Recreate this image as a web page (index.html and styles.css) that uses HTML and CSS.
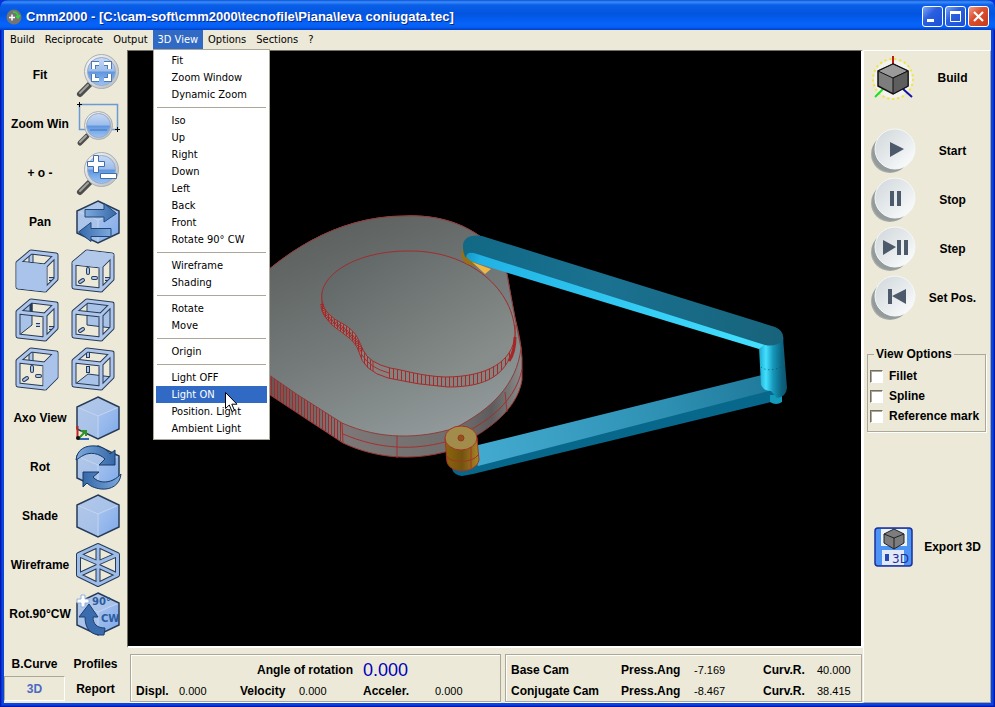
FILE: index.html
```html
<!DOCTYPE html>
<html lang="en">
<head>
<meta charset="utf-8">
<title>Cmm2000</title>
<link rel="stylesheet" href="styles.css">
</head>
<body>
<svg class="defs" aria-hidden="true">
  <defs>
    <linearGradient id="lens" x1="0" y1="0" x2="0" y2="1"><stop offset="0" stop-color="#c9daf4"/><stop offset=".48" stop-color="#9dbdeb"/><stop offset=".52" stop-color="#5f96df"/><stop offset="1" stop-color="#9cc4f5"/></linearGradient>
    <linearGradient id="ring" x1="0" y1="0" x2="1" y2="1"><stop offset="0" stop-color="#fafafa"/><stop offset="1" stop-color="#b4bac0"/></linearGradient>
    <linearGradient id="face" x1="0" y1="0" x2="1" y2="1"><stop offset="0" stop-color="#b4c9e9"/><stop offset="1" stop-color="#9dbbe8"/></linearGradient>
    <linearGradient id="faceR" x1="0" y1="0" x2="1" y2="1"><stop offset="0" stop-color="#a9c4ee"/><stop offset="1" stop-color="#7ea9ea"/></linearGradient>
    <linearGradient id="arrow" x1="0" y1="0" x2="1" y2="0"><stop offset="0" stop-color="#7ea9dd"/><stop offset="1" stop-color="#3568a8"/></linearGradient>
    <linearGradient id="arrowB" x1="0" y1="0" x2="1" y2="0"><stop offset="0" stop-color="#3568a8"/><stop offset="1" stop-color="#7ea9dd"/></linearGradient>
    <linearGradient id="knob" x1="0" y1="0" x2="1" y2="1"><stop offset="0" stop-color="#cfd6da"/><stop offset=".5" stop-color="#e6eaec"/><stop offset="1" stop-color="#ffffff"/></linearGradient>
    <symbol id="glass" viewBox="0 0 44 44">
      <path d="M13 32 4 41" stroke="#4d4d4d" stroke-width="6" stroke-linecap="round"/>
      <path d="M12 32 4 40" stroke="#a2a29e" stroke-width="2" stroke-linecap="round"/>
      <circle cx="25.500" cy="18.500" r="17" fill="url(#ring)" stroke="#a9aeb2"/>
      <circle cx="25.500" cy="18.500" r="14" fill="url(#lens)" stroke="#9aabc4"/>
    </symbol>
    <symbol id="solid" viewBox="0 0 44 44">
      <path d="M22 1 43 11V33L22 43 1 33V11Z" fill="url(#face)"/>
      <path d="M22 20 43 11V33L22 43Z" fill="url(#faceR)"/>
      <path d="M1 11 22 20 43 11M22 20V43" fill="none" stroke="#c3d5f1"/>
      <path d="M22 1 43 11V33L22 43 1 33V11Z" fill="none" stroke="#263b57" stroke-width="1.500"/>
    </symbol>
    <symbol id="stubs" viewBox="0 0 44 44">
      <g stroke-linecap="round"><path d="M17 20V24M9 33 12 31M22 29H25" stroke="#263b57" stroke-width="4"/><path d="M17 20V24M9 33 12 31M22 29H25" stroke="#afc6ea" stroke-width="2"/></g>
    </symbol>
    <symbol id="cage" viewBox="0 0 44 44">
      <g fill="none" stroke-linejoin="round">
        <path d="M3 14 30 17V41L3 38ZM3 14 16 3 41 6 30 17M41 6V30L30 41" stroke="#263b57" stroke-width="5"/>
        <path d="M3 14 30 17V41L3 38ZM3 14 16 3 41 6 30 17M41 6V30L30 41" stroke="#afc6ea" stroke-width="3"/>
      </g>
    </symbol>
    <symbol id="knobshape" viewBox="0 0 46 46">
      <circle cx="20" cy="26" r="19" fill="#a6aaa9"/>
      <circle cx="21" cy="25" r="19" fill="#8d9495" opacity=".7"/>
      <circle cx="25" cy="21" r="20" fill="url(#knob)" stroke="#f6f8f8"/>
    </symbol>
  </defs>
</svg>
<div class="window">
  <header class="titlebar">
    <svg class="app-icon" viewBox="0 0 16 16" aria-hidden="true"><circle cx="8" cy="8" r="7.500" fill="#747474"/><path d="M3 8.500H9M6 5.500V11.500" stroke="#fff" stroke-width="1.500"/><path d="M7 3Q12 3 12 8M10 7 12 9 14 6" fill="none" stroke="#35d23a" stroke-width="1.500"/></svg>
    <h1>Cmm2000 - [C:\cam-soft\cmm2000\tecnofile\Piana\leva coniugata.tec]</h1>
    <div class="window-buttons">
      <button type="button" aria-label="Minimize"><svg viewBox="0 0 19 19"><path d="M4 13.500H11" stroke="#fff" stroke-width="3"/></svg></button>
      <button type="button" aria-label="Maximize"><svg viewBox="0 0 19 19"><path d="M4.500 5V14.500H14.500V5" fill="none" stroke="#fff"/><path d="M4 5.500H15" stroke="#fff" stroke-width="3"/></svg></button>
      <button type="button" class="close" aria-label="Close"><svg viewBox="0 0 19 19"><path d="M5 5 14 14M14 5 5 14" stroke="#fff" stroke-width="2.200"/></svg></button>
    </div>
  </header>
  <nav class="menubar">
    <button type="button">Build</button>
    <button type="button">Reciprocate</button>
    <button type="button">Output</button>
    <div class="menu-host">
      <button type="button" class="open" aria-expanded="true">3D View</button>
      <div class="dropdown">
        <button type="button">Fit</button>
        <button type="button">Zoom Window</button>
        <button type="button">Dynamic Zoom</button>
        <hr>
        <button type="button">Iso</button>
        <button type="button">Up</button>
        <button type="button">Right</button>
        <button type="button">Down</button>
        <button type="button">Left</button>
        <button type="button">Back</button>
        <button type="button">Front</button>
        <button type="button">Rotate 90° CW</button>
        <hr>
        <button type="button">Wireframe</button>
        <button type="button">Shading</button>
        <hr>
        <button type="button">Rotate</button>
        <button type="button">Move</button>
        <hr>
        <button type="button">Origin</button>
        <hr>
        <button type="button">Light OFF</button>
        <button type="button" class="selected">Light ON</button>
        <button type="button">Position. Light</button>
        <button type="button">Ambient Light</button>
        <svg class="pointer" viewBox="0 0 13 21" aria-hidden="true"><path d="M.5 .5V16.500L4.300 13 7 19.500 9.500 18.500 6.800 12.200H12Z" fill="#fff" stroke="#000"/></svg>
      </div>
    </div>
    <button type="button">Options</button>
    <button type="button">Sections</button>
    <button type="button">?</button>
  </nav>
  <main class="workspace">
    <aside class="tools">
      <div class="tool-list">
        <button type="button" class="tool"><span>Fit</span>
          <svg viewBox="0 0 44 44"><use href="#glass"/><path d="M17.500 16V10.500H23M28 10.500H33.500V16M33.500 21V26.500H28M23 26.500H17.500V21" fill="none" stroke="#4c78b4" stroke-width="5"/><path d="M17.500 16V10.500H23M28 10.500H33.500V16M33.500 21V26.500H28M23 26.500H17.500V21" fill="none" stroke="#fff" stroke-width="3"/></svg></button>
        <button type="button" class="tool"><span>Zoom Win</span>
          <svg viewBox="0 0 44 44"><path d="M3.500 2.500H41.500V27.500H3.500Z" fill="none" stroke="#6a9bd2" stroke-width="1.500"/><path d="M11 34 4 41" stroke="#4d4d4d" stroke-width="5" stroke-linecap="round"/><path d="M10 34 4 40" stroke="#a2a29e" stroke-width="2" stroke-linecap="round"/><circle cx="22.500" cy="23.500" r="14" fill="url(#ring)" stroke="#a9aeb2"/><circle cx="22.500" cy="23.500" r="12" fill="url(#lens)" stroke="#9aabc4"/><path d="M14 28H31" stroke="#3f72b8"/><path d="M1 2.500H6M3.500 0V5M39 27.500H44M41.500 25V30" stroke="#000"/></svg></button>
        <button type="button" class="tool"><span>+ o -</span>
          <svg viewBox="0 0 44 44"><use href="#glass"/><path d="M17.500 4.500H22.500V10.500H28.500V15.500H22.500V21.500H17.500V15.500H11.500V10.500H17.500ZM24.500 22.500H40.500V27.500H24.500Z" fill="#fff" stroke="#3f6eae"/></svg></button>
        <button type="button" class="tool"><span>Pan</span>
          <svg viewBox="0 0 44 44"><use href="#solid"/><path d="M9 9.500H28V3.500L40.500 13.500 28 22V17H9Z" fill="url(#arrow)" stroke="#1f4878"/><path d="M35 28.500H15V22.500L2.500 32 15 41.500V36.500H35Z" fill="url(#arrowB)" stroke="#1f4878"/></svg></button>
        <div class="cubes">
          <button type="button" aria-label="Front face"><svg viewBox="0 0 44 44"><path d="M16 4V15" stroke="#263b57" stroke-width="5"/><path d="M16 4V14" stroke="#afc6ea" stroke-width="3"/><path d="M34 30H39" stroke="#263b57" stroke-width="4"/><path d="M34 30H39" stroke="#afc6ea" stroke-width="2"/><use href="#cage"/><path d="M3 14 30 17V41L3 38Z" fill="#a9c3ea" stroke="#a9c3ea" stroke-width="3" stroke-linejoin="round"/></svg></button>
          <button type="button" aria-label="Top face"><svg viewBox="0 0 44 44"><use href="#stubs"/><path d="M34 30H39" stroke="#263b57" stroke-width="4"/><path d="M34 30H39" stroke="#afc6ea" stroke-width="2"/><use href="#cage"/><path d="M3 14 16 3 41 6 30 17Z" fill="#b2c8e9" stroke="#b2c8e9" stroke-width="3" stroke-linejoin="round"/></svg></button>
        </div>
        <div class="cubes">
          <button type="button" aria-label="Left face"><svg viewBox="0 0 44 44"><path d="M3 14 17 5V27L3 38Z" fill="#a9c3e8" stroke="#263b57"/><path d="M16 4V15" stroke="#263b57" stroke-width="3"/><path d="M21 27H25M34 30H39" stroke="#263b57" stroke-width="4"/><path d="M21 27H25M34 30H39" stroke="#afc6ea" stroke-width="2"/><use href="#cage"/></svg></button>
          <button type="button" aria-label="Back face"><svg viewBox="0 0 44 44"><path d="M16 4 41 7V30L16 27Z" fill="#a9c3e8" stroke="#263b57"/><path d="M9 33 12 31" stroke="#263b57" stroke-width="4" stroke-linecap="round"/><path d="M9 33 12 31" stroke="#afc6ea" stroke-width="2" stroke-linecap="round"/><use href="#cage"/></svg></button>
        </div>
        <div class="cubes">
          <button type="button" aria-label="Right face"><svg viewBox="0 0 44 44"><path d="M16 4V15" stroke="#263b57" stroke-width="5"/><path d="M16 4V14" stroke="#afc6ea" stroke-width="3"/><use href="#stubs"/><use href="#cage"/><path d="M30 17 41 6V30L30 41Z" fill="#a9c3ea" stroke="#a9c3ea" stroke-width="3" stroke-linejoin="round"/></svg></button>
          <button type="button" aria-label="Bottom face"><svg viewBox="0 0 44 44"><path d="M3 38 17 27 41 30 30 41Z" fill="#a9c3e8" stroke="#263b57"/><path d="M17 5V11M17 19V26" stroke="#263b57" stroke-width="4"/><path d="M17 5V10M17 20V25" stroke="#afc6ea" stroke-width="2"/><use href="#cage"/></svg></button>
        </div>
        <button type="button" class="tool"><span>Axo View</span>
          <svg viewBox="0 0 44 44"><use href="#solid"/><path d="M1.500 43V30" stroke="#c81e1e" stroke-width="2"/><path d="M2 43H13" stroke="#2f67b4" stroke-width="2"/><path d="M2 43 9 36M5 35H10V40" fill="none" stroke="#2f9428" stroke-width="2"/><circle cx="2" cy="42" r="2" fill="#111"/></svg></button>
        <button type="button" class="tool"><span>Rot</span>
          <svg viewBox="0 0 44 44"><use href="#solid"/><path d="M0 15C1 4 10 0 20 1 27 2 31 5 34 9L39 5V20H23L29 14C23 8 14 7 8 10 4 12 2 14 0 15Z" fill="url(#arrow)" stroke="#173a66"/><path d="M45 29C44 40 35 45 25 44 18 43 14 41 11 38L7 42V27H23L17 32C22 38 31 38 37 35 41 33 43 31 45 29Z" fill="url(#arrowB)" stroke="#173a66"/></svg></button>
        <button type="button" class="tool"><span>Shade</span>
          <svg viewBox="0 0 44 44"><use href="#solid"/></svg></button>
        <button type="button" class="tool"><span>Wireframe</span>
          <svg viewBox="0 0 44 44"><g fill="none" stroke-linejoin="round"><path d="M22 2.500 41.500 11.500V32L22 41.500 2.500 32V11.500ZM2.500 11.500 22 20 41.500 11.500M22 2.500V41.500M2.500 32 22 23 41.500 32" stroke="#263b57" stroke-width="5"/><path d="M22 2.500 41.500 11.500V32L22 41.500 2.500 32V11.500ZM2.500 11.500 22 20 41.500 11.500M22 2.500V41.500M2.500 32 22 23 41.500 32" stroke="#9dbce8" stroke-width="3"/></g></svg></button>
        <button type="button" class="tool"><span>Rot.90°CW</span>
          <svg viewBox="0 0 44 44"><use href="#solid"/><path d="M5 3H9V7H13V11H9V15H5V11H1V7H5Z" fill="#fff" stroke="#8fb0dc"/><path d="M13 12 22 25H17C17 32 21 36 29 36L28 43C15 44 9 37 9 25H3Z" fill="#3b6cae" stroke="#1c3f70"/><text class="glyph-text" x="16" y="13">90°</text><text class="glyph-text" x="25" y="30">CW</text></svg></button>
      </div>
      <div class="tabs">
        <button type="button">B.Curve</button>
        <button type="button">Profiles</button>
        <button type="button" class="active">3D</button>
        <button type="button">Report</button>
      </div>
    </aside>
    <section class="center">
      <div class="viewer">
        <svg viewBox="128 51 733 595" role="img" aria-label="Conjugate cam with two levers">
          <defs>
            <linearGradient id="plate" gradientUnits="userSpaceOnUse" x1="350" y1="220" x2="440" y2="440"><stop offset="0" stop-color="#5d6261"/><stop offset=".5" stop-color="#757b7a"/><stop offset="1" stop-color="#929a9b"/></linearGradient>
            <linearGradient id="plate2" gradientUnits="userSpaceOnUse" x1="370" y1="250" x2="450" y2="380"><stop offset="0" stop-color="#626867"/><stop offset="1" stop-color="#868d8b"/></linearGradient>
            <linearGradient id="rim" gradientUnits="userSpaceOnUse" x1="270" y1="0" x2="522" y2="0"><stop offset="0" stop-color="#6d5452"/><stop offset=".3" stop-color="#7d7877"/><stop offset=".75" stop-color="#6f6d6d"/><stop offset=".88" stop-color="#5d5b5b"/><stop offset="1" stop-color="#8b8b8b"/></linearGradient>
            <linearGradient id="armTop" gradientUnits="userSpaceOnUse" x1="465" y1="240" x2="780" y2="340"><stop offset="0" stop-color="#126986"/><stop offset=".45" stop-color="#1a7190"/><stop offset="1" stop-color="#17637b"/></linearGradient>
            <linearGradient id="armSide" gradientUnits="userSpaceOnUse" x1="465" y1="255" x2="765" y2="350"><stop offset="0" stop-color="#1595c4"/><stop offset=".05" stop-color="#20b2e4"/><stop offset="1" stop-color="#45e0ff"/></linearGradient>
            <linearGradient id="arm2" gradientUnits="userSpaceOnUse" x1="478" y1="460" x2="775" y2="380"><stop offset="0" stop-color="#43aacf"/><stop offset=".6" stop-color="#2f92b5"/><stop offset="1" stop-color="#1f7899"/></linearGradient>
            <linearGradient id="post" x1="0" y1="0" x2="1" y2="0"><stop offset="0" stop-color="#18a9cc"/><stop offset=".25" stop-color="#44e0ff"/><stop offset=".5" stop-color="#1698bb"/><stop offset=".8" stop-color="#0d6583"/><stop offset="1" stop-color="#0f5068"/></linearGradient>
            <linearGradient id="roller" x1="0" y1="0" x2="1" y2="0"><stop offset="0" stop-color="#8b660c"/><stop offset=".5" stop-color="#74520e"/><stop offset="1" stop-color="#aa8528"/></linearGradient>
            <pattern id="hatch" width="3" height="20" patternUnits="userSpaceOnUse"><path d="M1.500 0V20" stroke="#a32b2b"/></pattern>
            <pattern id="hatchWide" width="4" height="20" patternUnits="userSpaceOnUse"><path d="M1.500 0V20" stroke="#a32b2b"/></pattern>
          </defs>
          <path d="M240 296C280 255 335 216 405 216C450 214 476 232 490 244L507 274Q511 297 515 318Q521 340 522 358L522 380C517 412 483 435 445 452C410 461 375 458 343 443L308 420 240 375Z" fill="url(#rim)" stroke="#9c3535"/>
          <path d="M240 296C280 255 335 216 405 216C450 214 476 232 490 244L507 274Q511 297 515 318L521 348C517 385 490 410 455 428C420 439 380 440 342 423L298 395 240 355Z" fill="url(#plate)" stroke="#8e3d3d"/>
          <path d="M240 355 298 395 342 423 343 443 308 420 240 375Z" fill="url(#hatch)"/>
          <path d="M343 434C380 450 415 450 445 442C480 428 515 405 522 369M397 436V458M505 392 507 412M342 423 343 443" fill="none" stroke="#a33030"/>
          <path d="M322 293V310Q324 317 332 325L348 337Q356 343 359 352Q363 371 388 378Q418 385 448 387C486 387 509 376 515 340V325L500 345 440 365 380 350 340 300Z" fill="#85827f" stroke="#a32b2b"/>
          <path d="M322 302V310Q324 317 332 325L348 337Q356 343 359 352Q363 367 373 371L373 361 345 320Z" fill="url(#hatch)"/>
          <path d="M389 367V378Q418 385 448 387C486 387 509 376 515 340L490 360 440 370Z" fill="url(#hatchWide)"/>
          <path d="M322 300C318 275 356 251 408 251C470 250 515 290 515 335C513 361 488 377 445 377C420 376 404 370 390 368Q369 363 363 350C356 334 356 333 345 325Q322 314 322 300Z" fill="url(#plate2)" stroke="#a32b2b"/>
          <path d="M322 304Q323 315 332 321L346 331Q356 338 362 352" fill="none" stroke="#a72626" stroke-width="4" stroke-dasharray="1 1"/>
          <path d="M515 337Q515 352 509 361" fill="none" stroke="#a72626" stroke-width="3"/>
          <path d="M362 355Q370 368 389 373M373 361V371" fill="none" stroke="#a33030"/>
          <path d="M463 249Q458 256 467 264L476 266 475 252Z" fill="#987015"/><path d="M472 262 491 269 485 274Z" fill="#efb745"/>
          <path d="M452 469Q454 475 462 476L473 474 775 401 782 390 775 382 470 460Z" fill="#08688b"/>
          <path d="M470 447 762 375 780 388 478 466Z" fill="url(#arm2)"/>
          <path d="M770 395H782V402Q776 406 770 402Z" fill="#149abb"/>
          <path d="M759 347 783 337 787 388Q786 397 777 398L771 391Q764 391 761 385Z" fill="url(#post)"/>
          <path d="M761 367Q768 373 785 366" fill="none" stroke="#09556e" stroke-dasharray="1 3"/>
          <path d="M464 244Q462 257 473 262L508 273 759 349 768 342Z" fill="url(#armSide)"/>
          <path d="M463 248C462 238 470 234 482 236L775 327Q785 331 783 341 775 347 765 345L477 254Q466 250 466 258Q463 254 463 248Z" fill="url(#armTop)"/>
          <path d="M445 438 447 462C450 474 476 474 479 460L477 438Z" fill="url(#roller)" stroke="#a33424"/>
          <path d="M446 455Q449 462 461 461 473 462 479 454M471 447V468" fill="none" stroke="#a33424"/>
          <ellipse cx="461" cy="438" rx="16" ry="12" fill="#a28c4b" stroke="#a33424"/>
          <circle cx="461" cy="438" r="3" fill="#8a571b" stroke="#a33424"/>
        </svg>
      </div>
      <div class="status">
        <div class="panel motion">
          <b class="angle-label">Angle of rotation</b><output class="angle">0.000</output>
          <b>Displ.</b><output>0.000</output><b>Velocity</b><output>0.000</output><b>Acceler.</b><output>0.000</output>
        </div>
        <div class="panel">
          <table>
            <colgroup><col class="c-name"><col class="c-press"><col class="c-pval"><col class="c-curv"><col></colgroup>
            <tr><th>Base Cam</th><th>Press.Ang</th><td>-7.169</td><th>Curv.R.</th><td>40.000</td></tr>
            <tr><th>Conjugate Cam</th><th>Press.Ang</th><td>-8.467</td><th>Curv.R.</th><td>38.415</td></tr>
          </table>
        </div>
      </div>
    </section>
    <aside class="actions">
      <button type="button" class="action build">
        <svg viewBox="0 0 46 46"><circle cx="23" cy="24" r="19" fill="#f3f3ef"/><circle cx="23" cy="24" r="20" fill="none" stroke="#f0e63c" stroke-width="2" stroke-dasharray="2 3"/><path d="M23 1V10" stroke="#c01818" stroke-width="2"/><path d="M13 34 5 42" stroke="#18e028" stroke-width="2"/><path d="M33 34 42 42" stroke="#1010b0" stroke-width="2"/><path d="M23 9 38 16V31L23 39 8 31V16Z" fill="#7d7d7d" stroke="#111" stroke-width="1.500"/><path d="M23 9 38 16 23 23 8 16Z" fill="#9a9a9a" stroke="#111"/><path d="M23 23 38 16V31L23 39Z" fill="#5e5e5e" stroke="#111"/></svg>
        <span>Build</span></button>
      <button type="button" class="action"><svg viewBox="0 0 46 46"><use href="#knobshape"/><path d="M20 14 34 21 20 29Z" fill="#4d5a6b"/></svg><span>Start</span></button>
      <button type="button" class="action"><svg viewBox="0 0 46 46"><use href="#knobshape"/><path d="M20 14H24V29H20ZM27 14H31V29H27Z" fill="#4d5a6b"/></svg><span>Stop</span></button>
      <button type="button" class="action"><svg viewBox="0 0 46 46"><use href="#knobshape"/><path d="M13 14 26 21 13 29ZM27 14H31V29H27ZM34 14H38V29H34Z" fill="#4d5a6b"/></svg><span>Step</span></button>
      <button type="button" class="action"><svg viewBox="0 0 46 46"><use href="#knobshape"/><path d="M18 14H22V29H18ZM36 14V29L22 21Z" fill="#4d5a6b"/></svg><span>Set Pos.</span></button>
      <fieldset>
        <legend>View Options</legend>
        <label><input type="checkbox">Fillet</label>
        <label><input type="checkbox">Spline</label>
        <label><input type="checkbox">Reference mark</label>
      </fieldset>
      <button type="button" class="action export">
        <svg viewBox="0 0 46 46"><rect x="5" y="4" width="37" height="38" rx="3" fill="#4d94f5" stroke="#1c2f9a" stroke-width="1.500"/><path d="M11 5H37V22H11Z" fill="#eef3fb"/><path d="M12 26H34V41H12Z" fill="#e2e9f6"/><path d="M15 30H19V37H15Z" fill="#2448b4"/><path d="M24 5 34 10V19L24 25 14 19V10Z" fill="#7d7d7d" stroke="#222"/><path d="M14 10 24 14 34 10M24 14V25" fill="none" stroke="#222"/><text class="disk-text" x="22" y="39">3D</text></svg>
        <span>Export 3D</span></button>
    </aside>
  </main>
</div>
</body>
</html>
```
FILE: styles.css
```css
* { box-sizing: border-box; }
body {
  margin: 0;
  font: bold 12px/16px "Liberation Sans", Arial, sans-serif;
  color: #000;
  background: #0831d9;
}
button {
  margin: 0;
  padding: 0;
  border: 0;
  background: none;
  font: inherit;
  color: inherit;
}
svg { display: block; overflow: visible; }
symbol { overflow: visible; }
.defs { position: absolute; width: 0; height: 0; }

.window {
  display: flex;
  flex-direction: column;
  min-height: 100vh;
  padding: 0 4px 4px;
  border-radius: 8px 8px 0 0;
  background: #0b46dc;
  box-shadow: inset 0 0 0 1px #0019a8, inset 0 0 0 2px #0831d9;
}
.titlebar {
  display: flex;
  align-items: center;
  height: 30px;
  margin: 0 -4px;
  padding: 3px 6px 0;
  border-radius: 8px 8px 0 0;
  background: linear-gradient(#0a4fd8 0, #3b8df8 2px, #0a5ee8 5px, #0355e0 14px, #0663fb 24px, #0560f2 27px, #003ecb 30px);
}
.app-icon { width: 16px; height: 16px; }
.titlebar h1 {
  flex: 1;
  margin: 0 0 0 4px;
  font: bold 13px/18px "Liberation Sans", Arial, sans-serif;
  color: #fff;
  text-shadow: 1px 1px 0 #0a2a88;
  white-space: nowrap;
}
.window-buttons { display: flex; gap: 2px; }
.window-buttons button {
  width: 21px;
  height: 21px;
  border: 1px solid #fff;
  border-radius: 3px;
  background: linear-gradient(135deg, #7fa6f4, #2a5fe0 40%, #1c4fd6);
}
.window-buttons .close { background: linear-gradient(135deg, #f0a088, #dc5030 40%, #c63a18); }

.menubar {
  display: flex;
  height: 20px;
  padding-left: 1px;
  background: #ece9d8;
  font: 11px/17px "DejaVu Sans Condensed", "Noto Sans", sans-serif;
}
.menubar > button, .menu-host > button { height: 19px; padding: 0 5px; }
.menubar .open { background: #316ac5; color: #fff; }
.menu-host { position: relative; }
.dropdown {
  position: absolute;
  top: 19px;
  left: 0;
  z-index: 2;
  display: flex;
  flex-direction: column;
  width: 117px;
  padding: 2px;
  border: 1px solid #aca899;
  background: #fff;
}
.dropdown button { height: 17px; padding-left: 16px; text-align: left; white-space: nowrap; }
.dropdown .selected { background: #316ac5; color: #fff; }
.dropdown hr { width: 109px; height: 1px; margin: 4px auto; border: 0; background: #aca899; }
.pointer { position: absolute; left: 71px; top: 342px; width: 13px; height: 21px; }

.workspace {
  flex: 1;
  display: grid;
  grid-template-columns: 123px 1fr 128px;
  background: #ece9d8;
}
.tools { display: flex; flex-direction: column; justify-content: space-between; padding-bottom: 2px; }
.tool { display: grid; grid-template-columns: 72px 44px; align-items: center; height: 49px; text-align: center; white-space: nowrap; }
.tool svg, .cubes svg { width: 44px; height: 44px; }
.cubes { display: flex; align-items: center; gap: 12px; height: 49px; padding-left: 11px; }
.glyph-text { font: bold 10px "DejaVu Sans", sans-serif; fill: #2c5c9e; }
.disk-text { font: 12px "DejaVu Sans", sans-serif; fill: #1d2f9c; }
.tabs { display: grid; grid-template-columns: 61px 61px; grid-auto-rows: 25px; }
.tabs .active { border: 1px solid; border-color: #aca899 #fff #fff #aca899; color: #4a68c4; }

.center { display: flex; flex-direction: column; min-width: 0; }
.viewer {
  flex: 1;
  display: grid;
  border: 1px solid;
  border-color: #716f64 #fff #fff #716f64;
  border-width: 1px 2px 2px 1px;
  background: #000;
}
.viewer svg { width: 100%; height: 100%; overflow: hidden; }
.status { display: grid; grid-template-columns: 371fr 357fr; gap: 4px; padding: 6px 1px 1px 3px; }
.panel { padding: 4px 5px 0; border: 1px solid #aca899; box-shadow: inset 1px 1px 0 #fff, 0 1px 0 #fff; }
.motion { display: grid; grid-template-columns: 43px 61px 59px 64px 72px 1fr; grid-template-rows: 22px 20px; align-items: center; }
.motion output, td { font-size: 11px; font-weight: normal; }
.angle-label { grid-column: 1 / 5; justify-self: end; padding: 0 10px 0 0; }
.motion .angle { grid-column: 5 / 7; font-size: 18px; color: #0000b8; }
table { width: 100%; table-layout: fixed; border-collapse: collapse; }
th, td { height: 22px; padding: 0; text-align: left; white-space: nowrap; }
tr:last-child > * { height: 20px; }
.c-name { width: 110px; }
.c-press { width: 73px; }
.c-pval { width: 69px; }
.c-curv { width: 54px; }

.actions {
  display: flex;
  flex-direction: column;
  border: 1px solid;
  border-color: #fff #aca899 #aca899 #fff;
  padding: 2px 4px 0 3px;
}
.action { display: grid; grid-template-columns: 46px 1fr; gap: 3px; align-items: center; height: 49px; padding-left: 3px; text-align: center; white-space: nowrap; }
.action svg { width: 46px; height: 46px; }
.build { margin-bottom: 24px; }
fieldset {
  margin: 24px 0 0;
  padding: 4px 0 5px 2px;
  border: 1px solid #aca899;
  box-shadow: 1px 1px 0 #fff;
}
legend { margin-left: 4px; padding: 0 2px; }
fieldset label { display: flex; align-items: center; gap: 6px; height: 20px; white-space: nowrap; }
fieldset input {
  appearance: none;
  width: 13px;
  height: 13px;
  margin: 0;
  border: 1px solid;
  border-color: #716f64 #fff #fff #716f64;
  background: #fff;
  box-shadow: inset 1px 1px 0 #aca899;
}
.export { margin-top: 90px; }
```
